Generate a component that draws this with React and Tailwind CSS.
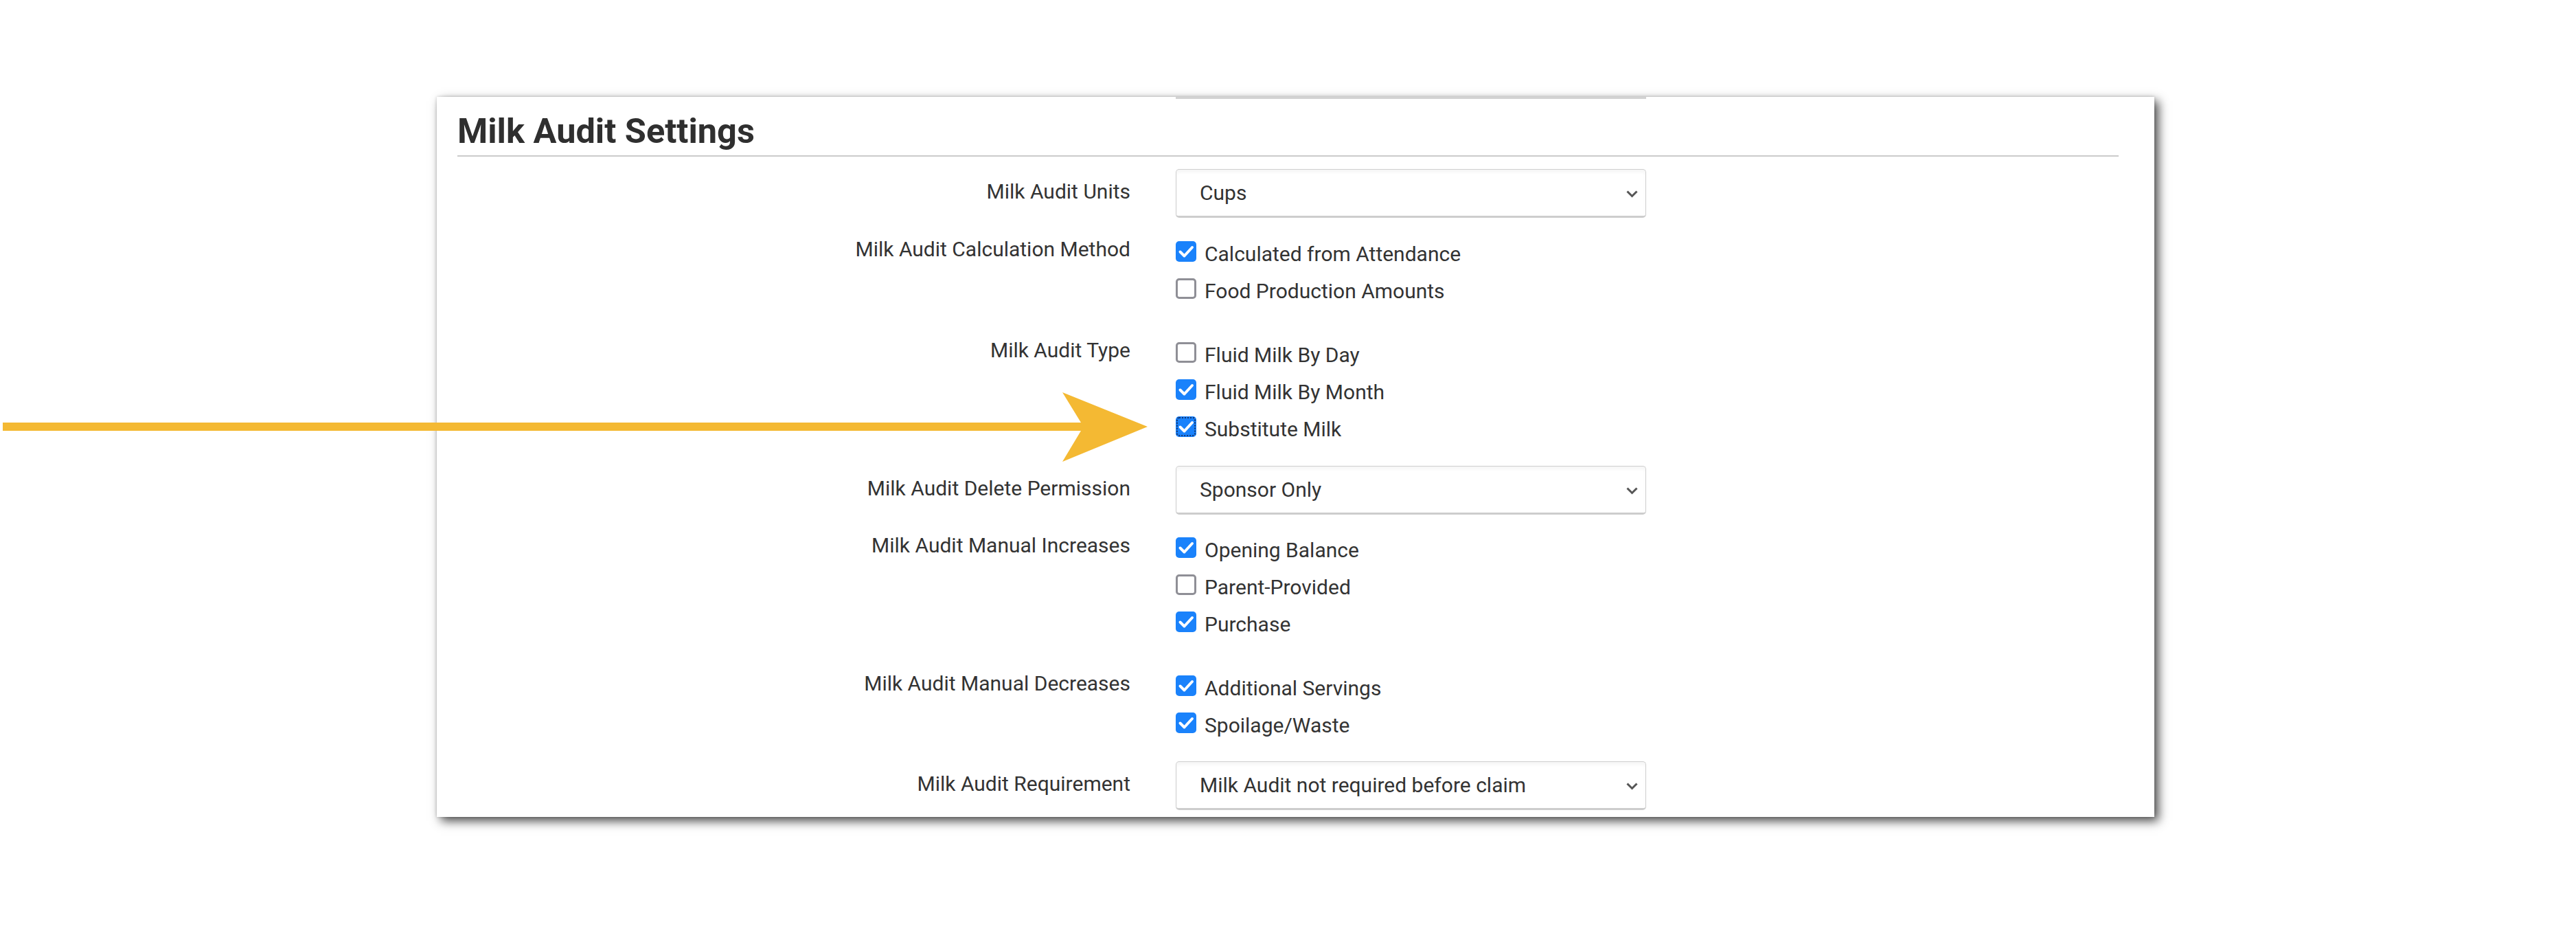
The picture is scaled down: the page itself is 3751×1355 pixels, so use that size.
import React from 'react';

const rows = [
  { kind: 'select', label: 'Milk Audit Units', value: 'Cups', gap: 'mt-[18px]' },
  {
    kind: 'checks',
    label: 'Milk Audit Calculation Method',
    gap: 'mt-[34px]',
    items: [
      ['Calculated from Attendance', true],
      ['Food Production Amounts', false],
    ],
  },
  {
    kind: 'checks',
    label: 'Milk Audit Type',
    gap: 'mt-[39px]',
    items: [
      ['Fluid Milk By Day', false],
      ['Fluid Milk By Month', true],
      ['Substitute Milk', true, true],
    ],
  },
  { kind: 'select', label: 'Milk Audit Delete Permission', value: 'Sponsor Only', gap: 'mt-[18px]' },
  {
    kind: 'checks',
    label: 'Milk Audit Manual Increases',
    gap: 'mt-[33px]',
    items: [
      ['Opening Balance', true],
      ['Parent-Provided', false],
      ['Purchase', true],
    ],
  },
  {
    kind: 'checks',
    label: 'Milk Audit Manual Decreases',
    gap: 'mt-[39px]',
    items: [
      ['Additional Servings', true],
      ['Spoilage/Waste', true],
    ],
  },
  { kind: 'select', label: 'Milk Audit Requirement', value: 'Milk Audit not required before claim', gap: 'mt-[17px]' },
];

export default function App() {
  return (
    <div className="relative w-[3751px] h-[1355px] overflow-hidden bg-white text-[#333333] font-['Roboto','Liberation_Sans',sans-serif]">
      <div className="ml-[636px] mt-[141px] w-[2501px] h-[1048px] bg-white shadow-[0_0_4px_rgba(0,0,0,0.18),6px_6px_14px_rgba(0,0,0,0.7)]">
        {/* bottom edge of the select from the section above */}
        <div className="ml-[1076px] w-[685px] h-[3px] bg-[#d2d2d2]" />

        <div className="pl-[30px] pr-[52px]">
          <h2 className="mt-[17px] pb-[5px] border-b-2 border-[#cbcbcb] text-[50.5px] leading-[60px] font-bold text-[#2f2f2f]">
            Milk Audit Settings
          </h2>

          {rows.map((row) =>
            row.kind === 'select' ? (
              <SelectRow key={row.label} {...row} />
            ) : (
              <CheckRow key={row.label} {...row} />
            )
          )}
        </div>
      </div>

      {/* callout arrow */}
      <svg className="absolute left-0 top-0 pointer-events-none" width="3751" height="1355" viewBox="0 0 3751 1355">
        <path
          d="M4 615 L1574 615 L1547 571 L1671 621 L1547 672 L1574 627 L4 627 Z"
          fill="#F4B933"
        />
      </svg>
    </div>
  );
}

function SelectRow({ label, value, gap }) {
  return (
    <div className={`flex items-center ${gap}`}>
      <div className="w-[980px] shrink-0 mb-[6px] text-right text-[30px] leading-[30px]">{label}</div>
      <div className="ml-[66px] w-[685px] h-[71px] flex items-center justify-between pl-[34px] pr-[11px] border border-[#cfcfcf] border-b-[3px] border-b-[#cdcdcd] rounded-[5px] bg-white shadow-[inset_0_4px_4px_rgba(0,0,0,0.04)]">
        <span className="text-[30px] leading-[30px] text-[#333333]">{value}</span>
        <svg width="17" height="11" viewBox="0 0 17 11" className="mt-[4px]">
          <path d="M1.5 1.5 L8.5 8.5 L15.5 1.5" fill="none" stroke="#555555" strokeWidth="3" />
        </svg>
      </div>
    </div>
  );
}

function CheckRow({ label, items, gap }) {
  return (
    <div className={`flex items-start ${gap}`}>
      <div className="w-[980px] shrink-0 -mt-[3px] text-right text-[30px] leading-[30px]">{label}</div>
      <div className="ml-[66px] flex flex-col">
        {items.map(([text, checked, focused]) => (
          <div key={text} className="h-[54px] flex items-start gap-[12px]">
            <Box checked={checked} focused={focused} />
            <span className="mt-[4px] text-[30px] leading-[30px] text-[#333333]">{text}</span>
          </div>
        ))}
      </div>
    </div>
  );
}

function Box({ checked, focused }) {
  if (!checked) {
    return <div className="w-[30px] h-[30px] shrink-0 rounded-[5px] border-[3px] border-[#8f8f96] bg-white" />;
  }
  return (
    <div
      className={`w-[30px] h-[30px] shrink-0 rounded-[5px] bg-[#1a82fb] flex items-center justify-center ${
        focused ? 'outline-2 outline-dotted outline-[#17366e] outline-offset-[-3px]' : ''
      }`}
    >
      <svg width="30" height="30" viewBox="0 0 30 30">
        <path d="M6.5 15.5 L12.5 21.5 L24 9" fill="none" stroke="#ffffff" strokeWidth="4" strokeLinecap="round" strokeLinejoin="round" />
      </svg>
    </div>
  );
}
